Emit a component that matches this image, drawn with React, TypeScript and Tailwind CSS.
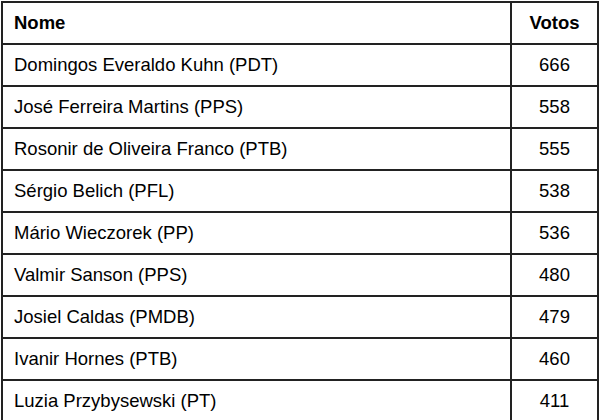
const ROWS: [string, number][] = [
  ['Domingos Everaldo Kuhn (PDT)', 666],
  ['José Ferreira Martins (PPS)', 558],
  ['Rosonir de Oliveira Franco (PTB)', 555],
  ['Sérgio Belich (PFL)', 538],
  ['Mário Wieczorek (PP)', 536],
  ['Valmir Sanson (PPS)', 480],
  ['Josiel Caldas (PMDB)', 479],
  ['Ivanir Hornes (PTB)', 460],
  ['Luzia Przybysewski (PT)', 411],
]

export default function App() {
  return (
    <div className="w-[600px] h-[420px] bg-white p-px font-['Liberation_Sans',Arial,sans-serif] text-[18.5px] text-black">
      <table className="w-[598px] h-[418px] border-collapse border-2 border-[#222]">
        <thead>
          <tr className="h-[42px]">
            <th className="border-2 border-[#222] text-left font-bold pl-[11px]">Nome</th>
            <th className="border-2 border-[#222] w-[87px] text-center font-bold">Votos</th>
          </tr>
        </thead>
        <tbody>
          {ROWS.map(([name, votes]) => (
            <tr key={name} className="h-[42px]">
              <td className="border-2 border-[#222] pl-[11px]">{name}</td>
              <td className="border-2 border-[#222] text-center">{votes}</td>
            </tr>
          ))}
        </tbody>
      </table>
    </div>
  )
}
